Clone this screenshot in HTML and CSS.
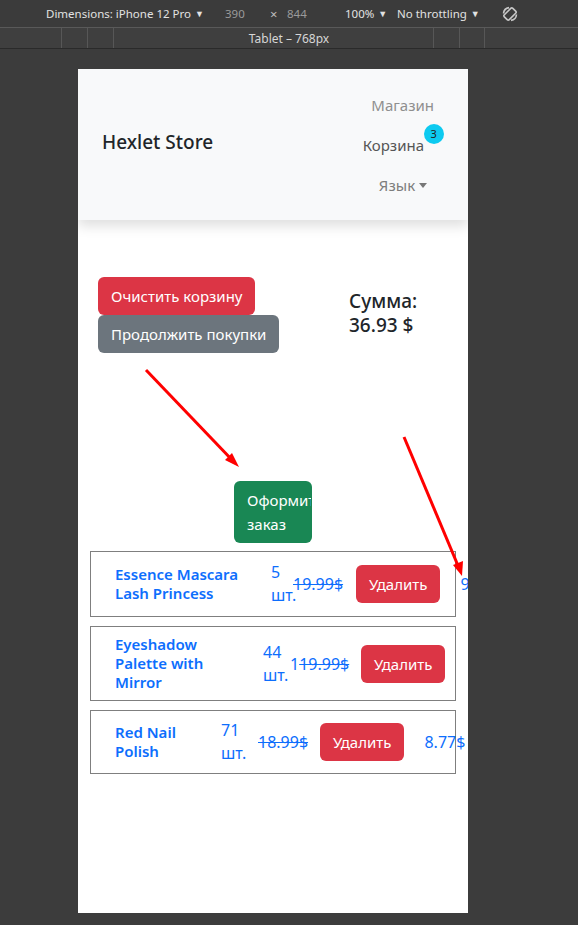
FILE: index.html
```html
<!DOCTYPE html>
<html lang="ru">
<head>
<meta charset="utf-8">
<title>Hexlet Store</title>
<link rel="stylesheet" href="styles.css">
</head>
<body>
<div class="toolbar">
  <span class="tb-item tb-device">Dimensions: iPhone 12 Pro <span class="caret">▼</span></span>
  <span class="tb-num tb-w">390</span>
  <span class="tb-x">×</span>
  <span class="tb-num tb-h">844</span>
  <span class="tb-item tb-zoom">100% <span class="caret">▼</span></span>
  <span class="tb-item tb-thr">No throttling <span class="caret">▼</span></span>
  <svg class="tb-rotate" width="18" height="18" viewBox="0 0 18 18" fill="none" stroke="#c8c8c8" stroke-width="1.6">
    <rect x="5.5" y="3" width="7" height="12" rx="1.5" transform="rotate(45 9 9)"/>
    <path d="M2.5 8.5 A6.5 6.5 0 0 1 8 2.6" />
    <path d="M15.5 9.5 A6.5 6.5 0 0 1 10 15.4" />
  </svg>
</div>
<div class="mediabar">
  <span class="sep s1"></span><span class="sep s2"></span><span class="sep s3"></span>
  <span class="media-label">Tablet – 768px</span>
  <span class="sep s4"></span><span class="sep s5"></span><span class="sep s6"></span>
</div>
<div class="stage">
  <div class="device">
    <header class="navbar">
      <div class="brand">Hexlet Store</div>
      <nav class="nav">
        <a class="nav-link shop">Магазин</a>
        <a class="nav-link cart">Корзина<span class="badge">3</span></a>
        <a class="nav-link lang">Язык <span class="dd"></span></a>
      </nav>
    </header>
    <main class="content">
      <div class="controls">
        <div class="btn-col">
          <button class="btn btn-danger">Очистить корзину</button>
          <button class="btn btn-secondary">Продолжить покупки</button>
        </div>
        <div class="sum">Сумма:<br>36.93 $</div>
      </div>
      <div class="order-wrap">
        <button class="btn btn-success order">Оформить заказ</button>
      </div>
      <div class="items">
        <div class="item r1">
          <div class="name">Essence Mascara Lash Princess</div>
          <div class="qty">5 шт.</div>
          <div class="price"><s>19.99$</s></div>
          <button class="btn btn-danger del">Удалить</button>
          <div class="total">9.99$</div>
        </div>
        <div class="item r2">
          <div class="name">Eyeshadow Palette with Mirror</div>
          <div class="qty">44 шт.</div>
          <div class="price">1<s>19.99$</s></div>
          <button class="btn btn-danger del">Удалить</button>
          <div class="total">119.99$</div>
        </div>
        <div class="item r3">
          <div class="name">Red Nail Polish</div>
          <div class="qty">71 шт.</div>
          <div class="price"><s>18.99$</s></div>
          <button class="btn btn-danger del">Удалить</button>
          <div class="total">8.77$</div>
        </div>
      </div>
    </main>
    <svg class="annot" width="390" height="844" viewBox="0 0 390 844">
      <line x1="68" y1="301" x2="156" y2="393" stroke="#ff0000" stroke-width="3"/>
      <polygon points="161,398 147,391 154,384" fill="#ff0000"/>
      <line x1="326" y1="368" x2="381" y2="499" stroke="#ff0000" stroke-width="3"/>
      <polygon points="384,507 375,496 385,492" fill="#ff0000"/>
    </svg>
  </div>
</div>
</body>
</html>
```
FILE: styles.css
```css
html, body {
  margin: 0;
  padding: 0;
}
body {
  background: #3c3c3c;
  width: 578px;
  height: 925px;
  overflow: hidden;
  font-family: "Noto Sans", "Open Sans", sans-serif;
}
.toolbar {
  height: 28px;
  background: #3b3b3b;
  border-bottom: 1px solid #595959;
  display: flex;
  align-items: center;
  font-size: 11.5px;
  color: #e2e2e2;
  padding-left: 46px;
  box-sizing: border-box;
}
.tb-item, .tb-num, .tb-x { white-space: nowrap; flex: none; }
.caret { font-size: 9px; margin-left: 1px; position: relative; top: -1px; }
.tb-num { color: #9a9a9a; }
.tb-device { width: 179px; }
.tb-w { width: 45px; }
.tb-x { color: #bdbdbd; width: 17px; font-size: 13px; }
.tb-h { width: 58px; }
.tb-zoom { width: 52px; }
.tb-thr { width: 104px; }
.tb-rotate { flex: none; }
.mediabar {
  height: 20px;
  background: #3f3f3f;
  border-bottom: 1px solid #2a2a2a;
  position: relative;
  display: flex;
  align-items: center;
  justify-content: center;
  font-size: 12px;
  color: #d6d6d6;
}
.sep {
  position: absolute;
  top: 0;
  bottom: 0;
  width: 1px;
  background: #575757;
}
.s1 { left: 61px; }
.s2 { left: 87px; }
.s3 { left: 113px; }
.s4 { left: 433px; }
.s5 { left: 459px; }
.s6 { left: 484px; }
.stage {
  padding: 20px 0 0 78px;
}
.device {
  width: 390px;
  height: 844px;
  background: #fff;
  position: relative;
  overflow: hidden;
  color: #212529;
  font-size: 16px;
  line-height: 1.5;
}
.navbar {
  background: #f8f9fa;
  height: 151px;
  display: flex;
  align-items: center;
  justify-content: space-between;
  padding: 0 34px 0 24px;
  box-shadow: 0 6px 12px rgba(0,0,0,0.13);
  position: relative;
}
.brand {
  font-size: 19px;
  font-weight: 500;
  color: #212529;
  margin-top: -4px;
}
.nav {
  display: flex;
  flex-direction: column;
  align-items: flex-end;
}
.nav-link {
  padding: 8px 0;
  line-height: 24px;
  font-size: 15px;
  position: relative;
}
.shop { color: #8f8f8f; }
.cart { color: #555; margin-right: 10px; }
.lang { color: #7d7d7d; margin-right: 7px; }
.badge {
  position: absolute;
  left: 61px;
  top: -1px;
  width: 20px;
  height: 20px;
  border-radius: 50%;
  background: #0dcaf0;
  color: #222;
  font-size: 11px;
  line-height: 20px;
  text-align: center;
}
.dd {
  display: inline-block;
  border-top: 5px solid #777;
  border-left: 4px solid transparent;
  border-right: 4px solid transparent;
  vertical-align: 3px;
}
.content {
  padding-top: 57px;
}
.controls {
  display: flex;
  padding-left: 20px;
}
.btn-col {
  display: flex;
  flex-direction: column;
  align-items: flex-start;
  width: 251px;
}
.btn {
  font-family: inherit;
  font-size: 15px;
  line-height: 24px;
  padding: 6px 12px;
  border: 1px solid transparent;
  border-radius: 6px;
  color: #fff;
  white-space: nowrap;
}
.btn-danger { background: #dc3545; }
.btn-secondary { background: #6c757d; }
.btn-success { background: #198754; }
.sum {
  font-size: 19px;
  font-weight: 500;
  line-height: 24px;
  padding-top: 12px;
}
.order-wrap {
  display: flex;
  justify-content: center;
  margin-top: 128px;
}
.order {
  width: 78px;
  white-space: normal;
  overflow: hidden;
  padding: 6px 12px;
  text-align: left;
}
.items {
  margin: 8px 12px 0;
  display: flex;
  flex-direction: column;
  gap: 9px;
}
.item {
  border: 1px solid #7f7f7f;
  display: flex;
  align-items: center;
  padding: 8px 0 8px 24px;
  color: #0d6efd;
  white-space: nowrap;
}
.name {
  font-size: 15px;
  font-weight: 600;
  line-height: 19px;
  white-space: normal;
  flex: none;
}
.qty {
  white-space: normal;
  line-height: 23px;
  flex: none;
}
.price { flex: none; }
.del { flex: none; }
.total { flex: none; }
.r1 .name { width: 156px; }
.r1 .qty { width: 22px; }
.r1 .price { width: 63px; }
.r1 .del { margin-right: 20px; }
.r1 { min-height: 48px; }
.r2 .name { width: 100px; margin-right: 48px; }
.r2 .qty { width: 27px; }
.r2 .price { width: 71px; }
.r2 .del { margin-right: 22px; }
.r3 .name { width: 106px; }
.r3 .qty { width: 37px; }
.r3 .price { width: 62px; }
.r3 .del { margin-right: 20px; }
.annot {
  position: absolute;
  left: 0;
  top: 0;
  pointer-events: none;
}
```
